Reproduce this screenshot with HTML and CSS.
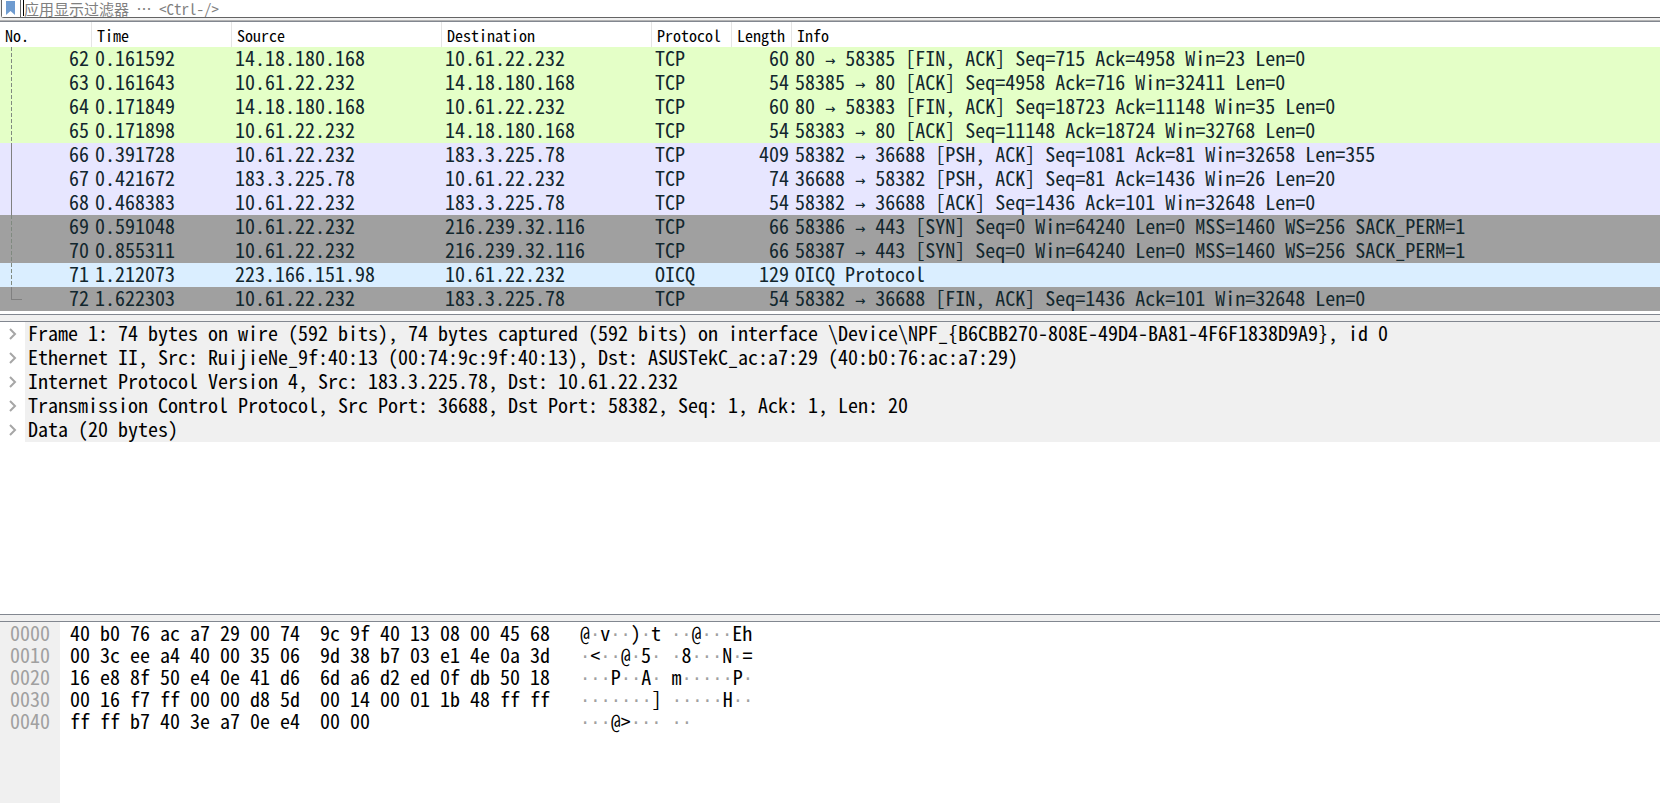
FILE: index.html
```
<!DOCTYPE html>
<html lang="zh-CN">
<head>
<meta charset="utf-8">
<title>Packet capture</title>
<link rel="stylesheet" href="styles.css">
</head>
<body>
<form class="filter">
  <button class="filter-bookmark" type="button" aria-label="书签">
    <svg width="10" height="14" viewBox="0 0 10 14"><path d="M0 0h9v14L4.500 10 0 14z" fill="#6e9bd0"/></svg>
  </button>
  <label class="filter-field">
    <span class="caret"></span>
    <input type="text" aria-label="显示过滤器" placeholder="应用显示过滤器 ⋯ &lt;Ctrl-/&gt;">
  </label>
</form>
<main class="panes">
  <section class="pane packets">
    <table class="packet-table">
      <colgroup><col class="c-no"><col class="c-time"><col class="c-addr"><col class="c-addr"><col class="c-proto"><col class="c-len"><col></colgroup>
      <thead><tr><th>No.</th><th>Time</th><th>Source</th><th>Destination</th><th>Protocol</th><th>Length</th><th>Info</th></tr></thead>
      <tbody>
        <tr class="http other"><td>62</td><td>0.161592</td><td>14.18.180.168</td><td>10.61.22.232</td><td>TCP</td><td>60</td><td>80 <span class="half">→</span> 58385 [FIN, ACK] Seq=715 Ack=4958 Win=23 Len=0</td></tr>
        <tr class="http other"><td>63</td><td>0.161643</td><td>10.61.22.232</td><td>14.18.180.168</td><td>TCP</td><td>54</td><td>58385 <span class="half">→</span> 80 [ACK] Seq=4958 Ack=716 Win=32411 Len=0</td></tr>
        <tr class="http other"><td>64</td><td>0.171849</td><td>14.18.180.168</td><td>10.61.22.232</td><td>TCP</td><td>60</td><td>80 <span class="half">→</span> 58383 [FIN, ACK] Seq=18723 Ack=11148 Win=35 Len=0</td></tr>
        <tr class="http other"><td>65</td><td>0.171898</td><td>10.61.22.232</td><td>14.18.180.168</td><td>TCP</td><td>54</td><td>58383 <span class="half">→</span> 80 [ACK] Seq=11148 Ack=18724 Win=32768 Len=0</td></tr>
        <tr class="tcp same"><td>66</td><td>0.391728</td><td>10.61.22.232</td><td>183.3.225.78</td><td>TCP</td><td>409</td><td>58382 <span class="half">→</span> 36688 [PSH, ACK] Seq=1081 Ack=81 Win=32658 Len=355</td></tr>
        <tr class="tcp same"><td>67</td><td>0.421672</td><td>183.3.225.78</td><td>10.61.22.232</td><td>TCP</td><td>74</td><td>36688 <span class="half">→</span> 58382 [PSH, ACK] Seq=81 Ack=1436 Win=26 Len=20</td></tr>
        <tr class="tcp same"><td>68</td><td>0.468383</td><td>10.61.22.232</td><td>183.3.225.78</td><td>TCP</td><td>54</td><td>58382 <span class="half">→</span> 36688 [ACK] Seq=1436 Ack=101 Win=32648 Len=0</td></tr>
        <tr class="syn other"><td>69</td><td>0.591048</td><td>10.61.22.232</td><td>216.239.32.116</td><td>TCP</td><td>66</td><td>58386 <span class="half">→</span> 443 [SYN] Seq=0 Win=64240 Len=0 MSS=1460 WS=256 SACK_PERM=1</td></tr>
        <tr class="syn other"><td>70</td><td>0.855311</td><td>10.61.22.232</td><td>216.239.32.116</td><td>TCP</td><td>66</td><td>58387 <span class="half">→</span> 443 [SYN] Seq=0 Win=64240 Len=0 MSS=1460 WS=256 SACK_PERM=1</td></tr>
        <tr class="udp other"><td>71</td><td>1.212073</td><td>223.166.151.98</td><td>10.61.22.232</td><td>OICQ</td><td>129</td><td>OICQ Protocol</td></tr>
        <tr class="syn last"><td>72</td><td>1.622303</td><td>10.61.22.232</td><td>183.3.225.78</td><td>TCP</td><td>54</td><td>58382 <span class="half">→</span> 36688 [FIN, ACK] Seq=1436 Ack=101 Win=32648 Len=0</td></tr>
      </tbody>
    </table>
  </section>
  <section class="pane details">
    <ul class="tree">
      <li><button type="button" aria-label="展开"><svg width="8" height="12" viewBox="0 0 8 12"><path d="M1 1l5 5-5 5" fill="none" stroke="#a6a6a6" stroke-width="2"/></svg></button><span>Frame 1: 74 bytes on wire (592 bits), 74 bytes captured (592 bits) on interface \Device\NPF_{B6CBB270-808E-49D4-BA81-4F6F1838D9A9}, id 0</span></li>
      <li><button type="button" aria-label="展开"><svg width="8" height="12" viewBox="0 0 8 12"><path d="M1 1l5 5-5 5" fill="none" stroke="#a6a6a6" stroke-width="2"/></svg></button><span>Ethernet II, Src: RuijieNe_9f:40:13 (00:74:9c:9f:40:13), Dst: ASUSTekC_ac:a7:29 (40:b0:76:ac:a7:29)</span></li>
      <li><button type="button" aria-label="展开"><svg width="8" height="12" viewBox="0 0 8 12"><path d="M1 1l5 5-5 5" fill="none" stroke="#a6a6a6" stroke-width="2"/></svg></button><span>Internet Protocol Version 4, Src: 183.3.225.78, Dst: 10.61.22.232</span></li>
      <li><button type="button" aria-label="展开"><svg width="8" height="12" viewBox="0 0 8 12"><path d="M1 1l5 5-5 5" fill="none" stroke="#a6a6a6" stroke-width="2"/></svg></button><span>Transmission Control Protocol, Src Port: 36688, Dst Port: 58382, Seq: 1, Ack: 1, Len: 20</span></li>
      <li><button type="button" aria-label="展开"><svg width="8" height="12" viewBox="0 0 8 12"><path d="M1 1l5 5-5 5" fill="none" stroke="#a6a6a6" stroke-width="2"/></svg></button><span>Data (20 bytes)</span></li>
    </ul>
  </section>
  <section class="pane bytes">
<pre class="offsets">0000
0010
0020
0030
0040</pre>
<pre class="hex">40 b0 76 ac a7 29 00 74  9c 9f 40 13 08 00 45 68
00 3c ee a4 40 00 35 06  9d 38 b7 03 e1 4e 0a 3d
16 e8 8f 50 e4 0e 41 d6  6d a6 d2 ed 0f db 50 18
00 16 f7 ff 00 00 d8 5d  00 14 00 01 1b 48 ff ff
ff ff b7 40 3e a7 0e e4  00 00</pre>
<pre class="ascii">@<i>·</i>v<i>··</i>)<i>·</i>t <i>··</i>@<i>···</i>Eh
<i>·</i>&lt;<i>··</i>@<i>·</i>5<i>·</i> <i>·</i>8<i>···</i>N<i>·</i>=
<i>···</i>P<i>··</i>A<i>·</i> m<i>·····</i>P<i>·</i>
<i>·······</i>] <i>·····</i>H<i>··</i>
<i>···</i>@&gt;<i>···</i> <i>··</i></pre>
  </section>
</main>
</body>
</html>
```

FILE: styles.css
```
* { box-sizing: border-box; }
body {
  margin: 0;
  min-height: 100vh;
  display: flex;
  flex-direction: column;
  background: #f0f0f0;
  color: #000;
  font: 20px/22px "Noto Sans Mono CJK SC", "Liberation Mono", monospace;
}
.filter {
  height: 18px;
  margin-left: 1px;
  display: flex;
  background: #fff;
  border: solid #646464;
  border-width: 0 0 1px 1px;
  border-bottom-left-radius: 3px;
}
.filter-bookmark {
  width: 19px;
  padding: 1px 0 0 4px;
  border: 0;
  border-right: 1px solid #646464;
  background: #fff;
  display: flex;
}
.filter-field {
  flex: 1;
  display: flex;
  padding-left: 2px;
}
.caret { width: 1px; height: 16px; background: #000; }
.filter input {
  flex: 1;
  height: 17px;
  padding: 0;
  border: 0;
  outline: 0;
  background: none;
  font: 15px/17px "Noto Sans Mono CJK SC", "Noto Sans CJK SC", monospace;
}
.filter input::placeholder { color: #808080; opacity: 1; }
.panes {
  flex: 1;
  margin-top: 2px;
  border-top: 1px solid #b4b4b4;
  display: flex;
  flex-direction: column;
  gap: 6px;
}
.pane { background: #fff; border-top: 1px solid #828790; }
.packets, .details { border-bottom: 1px solid #828790; }
.packets { padding-bottom: 3px; }
.packet-table { width: 100%; table-layout: fixed; border-collapse: separate; border-spacing: 0; }
.c-no { width: 92px; }
.c-time { width: 140px; }
.c-addr { width: 210px; }
.c-proto { width: 80px; }
.c-len { width: 60px; }
th {
  height: 25px;
  padding: 0 0 0 5px;
  border-right: 1px solid #e5e5e5;
  text-align: left;
  font-size: 16px;
  font-weight: 400;
  line-height: 24px;
}
th:last-child { border-right: 0; }
td { height: 24px; padding: 0 3px; white-space: pre; color: #12272e; vertical-align: top; }
td:first-child, td:nth-child(6) { text-align: right; }
.half { font: 17px/10px "DejaVu Sans Mono", monospace; }
.http { background: #e4ffc7; }
.tcp { background: #e7e6ff; }
.syn { background: #a0a0a0; }
.udp { background: #daeeff; }
.other td:first-child {
  background: repeating-linear-gradient(#808a80 0 4px, transparent 4px 6px) 11px 0 / 1px 100% no-repeat;
}
.same td:first-child {
  background: linear-gradient(#808080, #808080) 11px 0 / 1px 100% no-repeat;
}
.last td:first-child {
  background:
    linear-gradient(#808080, #808080) 11px 0 / 1px 12px no-repeat,
    linear-gradient(#808080, #808080) 11px 12px / 11px 1px no-repeat;
}
.details { flex: 21 1 0; }
.tree { margin: 0; padding: 0; list-style: none; }
.tree li { display: flex; min-height: 24px; }
.tree button {
  width: 25px;
  height: 24px;
  padding: 0 0 0 9px;
  border: 0;
  background: #fff;
  display: flex;
  align-items: center;
}
.tree span { flex: 1; padding-left: 3px; background: #f0f0f0; white-space: pre; }
.bytes { flex: 13 1 0; display: flex; }
.bytes pre { margin: 0; padding: 0 10px; font: inherit; }
.offsets { width: 60px; background: #f0f0f0; color: #a0a0a0; }
.hex { width: 510px; }
.ascii i { font: 17px/10px "DejaVu Sans Mono", monospace; color: #a0a0a0; }
```
